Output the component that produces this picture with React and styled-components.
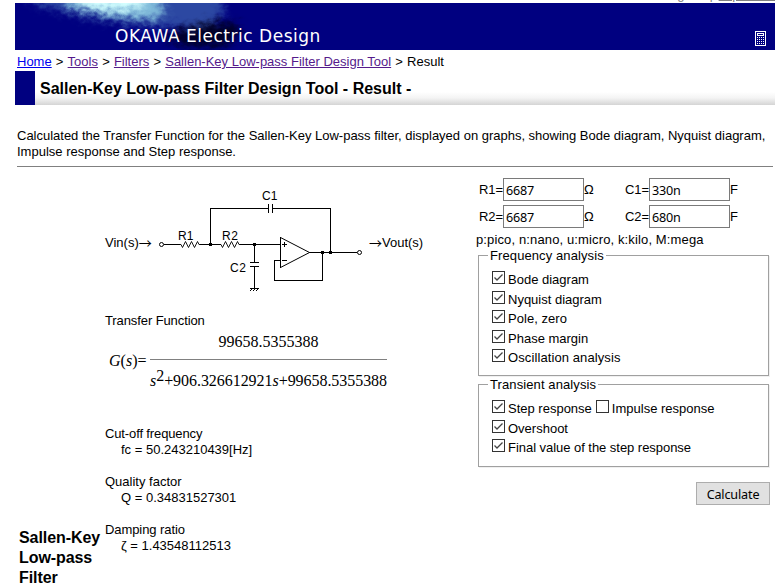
import React from "react";
import styled, { createGlobalStyle } from "styled-components";

const GlobalStyle = createGlobalStyle`
  *, *::before, *::after { box-sizing: border-box; }
  html, body { margin: 0; padding: 0; background: #fff; overflow: hidden; }
  body { font: 13px/16px "Liberation Sans", Arial, sans-serif; color: #000; }
`;

const Page = styled.div`
  width: 784px;
  height: 584px;
  padding: 0 9px 0 15px;
  overflow: hidden;
  display: flex;
  flex-direction: column;
`;

const LanguageBar = styled.div`
  height: 3px;
  flex: none;
  overflow: hidden;
  display: flex;
  flex-direction: column-reverse;
  color: #808080;
`;

const Languages = styled.div`
  flex: none;
  height: 16px;
  text-align: right;
  white-space: pre;
  word-spacing: 2px;
`;

const Banner = styled.header`
  height: 47px;
  flex: none;
  background: #000080;
  display: grid;
  & > * { grid-area: 1 / 1; }
`;

const BannerRow = styled.div`
  display: flex;
  justify-content: space-between;
  align-items: flex-end;
  padding: 0 9px 4px 100px;
  z-index: 1;
`;

const SiteName = styled.div`
  color: #fff;
  font: 17px/20px "DejaVu Sans", sans-serif;
  letter-spacing: 0.52px;
  white-space: nowrap;
`;

const Crumbs = styled.nav`
  height: 21px;
  flex: none;
  padding: 4px 0 0 2px;
  white-space: nowrap;
  word-spacing: ${(p) => p.$gap}px;
`;

const Link = styled.a`
  color: ${(p) => p.$color || "#551a8b"};
  text-decoration: underline;
  word-spacing: 0;
`;

const Heading = styled.h1`
  margin: 0;
  height: 34px;
  flex: none;
  border-left: 20px solid #000080;
  padding: 8px 0 0 5px;
  font-size: 16px;
  line-height: 20px;
  background: linear-gradient(#fff 0, #fff 21px, #f4f4f4 27px, #d4d4d4 34px);
`;

const Intro = styled.div`
  height: 62px;
  flex: none;
  margin: 0 2px;
  padding-top: 23px;
  border-bottom: 1px solid #808080;
`;

const TextLine = styled.div`
  height: ${(p) => p.$height || 16}px;
  white-space: pre;
  letter-spacing: ${(p) => p.$spacing || 0}px;
  padding-left: ${(p) => p.$indent || 0}px;
`;

const Main = styled.main`
  display: flex;
  flex: none;
  height: 417px;
`;

const Side = styled.aside`
  width: 90px;
  padding: 361px 0 0 4px;
  font-size: 16px;
  line-height: 20px;
  font-weight: bold;
  white-space: nowrap;
  letter-spacing: -0.08px;
`;

const Results = styled.section`
  width: 356px;
`;

const CircuitRow = styled.div`
  display: flex;
  height: 146px;
  padding-top: 21px;
`;

const Port = styled.div`
  width: ${(p) => p.$width}px;
  padding-top: 47px;
  white-space: nowrap;
  display: flex;
`;

const Arrow = styled.span`
  width: 13px;
  font-family: "Noto Sans CJK JP", sans-serif;
`;

const Formula = styled.div`
  display: flex;
  height: 97px;
  padding: 3px 0 0 4px;
  font: 16px/20px "Liberation Serif", "Times New Roman", serif;
`;

const FormulaName = styled.div`
  width: 41px;
  padding-top: 19px;
`;

const Fraction = styled.div`
  width: 237px;
  height: 59px;
  text-align: center;
  white-space: nowrap;
`;

const Numerator = styled.div`
  height: 28px;
  border-bottom: 1px solid #808080;
`;

const Denominator = styled.div`
  padding-top: 11px;
  text-align: left;
  letter-spacing: -0.05px;
  sup { font-size: 16px; line-height: 0; vertical-align: 5px; }
`;

const ResultItem = styled.div`
  height: 48px;
`;

const Form = styled.form`
  width: 309px;
  padding: 11px 0 0 15px;
`;

const FieldRow = styled.div`
  display: flex;
  height: 27px;
  padding-left: 3px;
`;

const FieldLabel = styled.label`
  width: ${(p) => p.$width}px;
  padding-top: 4px;
  white-space: nowrap;
  letter-spacing: -0.1px;
`;

const Input = styled.input`
  width: 81px;
  height: 23px;
  border: 1px solid #7a7a7a;
  border-radius: 0;
  background: #fff;
  padding: 1px 2px 0;
  outline: none;
  font: 12.6px "Noto Sans", sans-serif;
  letter-spacing: -0.2px;
  color: #000;
`;

const Group = styled.fieldset`
  margin: 0 0 0 2px;
  padding: 8px 0 0 13px;
  width: 291px;
  min-width: 0;
  height: ${(p) => p.$height}px;
  border: 1px solid #a0a0a0;
  box-shadow: 1px 1px 0 #f0f0f0;
  legend {
    margin-left: -4px;
    padding: 1px 2px 0;
    height: 16px;
    white-space: nowrap;
    letter-spacing: 0.1px;
  }
`;

const CheckRow = styled.div`
  display: flex;
  height: 19.5px;
`;

const CheckLabel = styled.label`
  display: flex;
  gap: 3px;
  padding-right: 4px;
  white-space: nowrap;
  span { padding-top: 1px; letter-spacing: ${(p) => p.$spacing || 0}px; }
`;

const Box = styled.svg`
  width: 13px;
  height: 13px;
  flex: none;
`;

const Submit = styled.button`
  display: block;
  width: 74px;
  height: 23px;
  margin: 15px 0 0 220px;
  padding: 1px 0 0;
  border: 1px solid #adadad;
  border-radius: 0;
  background: #e1e1e1;
  font: 12.6px "Noto Sans", sans-serif;
  letter-spacing: -0.15px;
  color: #000;
`;

function BannerArt() {
  return (
    <svg width="760" height="47" viewBox="15 3 760 47">
      <defs>
        <filter id="ripple" x="-20%" y="-60%" width="140%" height="220%" colorInterpolationFilters="sRGB">
          <feGaussianBlur stdDeviation="4.5" result="b" />
          <feTurbulence type="fractalNoise" baseFrequency="0.14 0.2" numOctaves="2" seed="4" result="n" />
          <feDisplacementMap in="b" in2="n" scale="12" xChannelSelector="R" yChannelSelector="G" />
        </filter>
      </defs>
      <g filter="url(#ripple)">
        <path d="M24 -12H215L226 12L205 27L166 27L130 24L96 19L58 10L34 4Z" fill="#3f66b0" opacity=".7" />
        <path d="M55 -12H150L166 12L154 20L126 18L98 14L70 8Z" fill="#8fd0e4" opacity=".85" />
        <path d="M72 -12H134L146 6L124 10L100 9L80 5Z" fill="#d4ffff" />
        <path d="M160 37L190 27L214 22L236 24L242 34L222 47L184 46Z" fill="#000018" opacity=".85" />
      </g>
    </svg>
  );
}

function CalculatorIcon() {
  const dots = [];
  for (let r = 0; r < 4; r++)
    for (let c = 0; c < 4; c++)
      dots.push(<rect key={`${r}-${c}`} x={2 + c * 2} y={6 + r * 2} width="1" height="1" />);
  return (
    <svg width="11" height="15" viewBox="0 0 11 15" fill="#fff" shapeRendering="crispEdges">
      <path d="M.5.5h10v14H.5zM2.5 2.5h6v2h-6z" fill="none" stroke="#fff" />
      {dots}
    </svg>
  );
}

function Circuit() {
  return (
    <svg width="212" height="110" viewBox="157 188 212 110" fill="none" stroke="#000" shapeRendering="crispEdges">
      <path d="M164 244.5H180M200 244.5H221M240 244.5H280M210.5 245V208.5H268M272 208.5H330.5V252" />
      <path d="M268.5 204V213M272.5 204V213M254.5 244V262M250 262.5H259M250 266.5H259M254.5 267V288M250 288.5H259" />
      <path d="M250 291L252 289M253 291L255 289M256 291L258 289" />
      <path d="M280.5 237V268M309 252.5H357M322.5 252V280.5H274.5V260.5H280M282 244.5H287M284.5 242V247M282 260.5H287" />
      <g shapeRendering="auto">
        <path d="M280.5 237.5L309.5 252.5L280.5 267.5" />
        <path d="M180 244.5h1l1.5 3l3-6l3 6l3-6l3 6l3-6l1.5 3h1M220 244.5h1l1.5 3l3-6l3 6l3-6l3 6l3-6l1.5 3h1" strokeWidth=".9" />
        <circle cx="161.5" cy="244.5" r="2" />
        <circle cx="359.5" cy="252.5" r="2" />
      </g>
      <path d="M209 243h3v3h-3zM253 243h3v3h-3zM321 251h3v3h-3zM329 251h3v3h-3z" fill="#000" stroke="none" />
      <g fill="#000" stroke="none" fontFamily="Liberation Sans, Arial, sans-serif" fontSize="12">
        <text x="178" y="240">R1</text>
        <text x="222" y="240" textLength="16">R2</text>
        <text x="262" y="200">C1</text>
        <text x="230" y="272" textLength="16">C2</text>
      </g>
    </svg>
  );
}

function Check({ label, checked = true, spacing }) {
  return (
    <CheckLabel $spacing={spacing}>
      <Box viewBox="0 0 13 13" fill="none">
        <rect x=".5" y=".5" width="12" height="12" fill="#fff" stroke="#333" />
        {checked && <path d="M2.5 6.5L5 9L10.5 3.5" stroke="#444" strokeWidth="1.3" />}
      </Box>
      <span>{label}</span>
    </CheckLabel>
  );
}

function Fields({ n, c }) {
  return (
    <FieldRow>
      <FieldLabel $width={24}>R{n}=</FieldLabel>
      <Input defaultValue="6687" />
      <FieldLabel $width={41}>Ω</FieldLabel>
      <FieldLabel $width={24}>C{n}=</FieldLabel>
      <Input defaultValue={c} />
      <FieldLabel $width={10}>F</FieldLabel>
    </FieldRow>
  );
}

const results = [
  ["Cut-off frequency", "fc = 50.243210439[Hz]", -0.13],
  ["Quality factor", "Q = 0.34831527301", 0],
  ["Damping ratio", "ζ = 1.43548112513", -0.08],
];

const frequencyChecks = [
  ["Bode diagram", 0],
  ["Nyquist diagram", 0],
  ["Pole, zero", 0.05],
  ["Phase margin", 0],
  ["Oscillation analysis", 0.1],
];

export default function App() {
  return (
    <Page>
      <GlobalStyle />
      <LanguageBar>
        <Languages>English | <Link $color="#808080">Japanese</Link></Languages>
      </LanguageBar>
      <Banner>
        <BannerArt />
        <BannerRow>
          <SiteName>OKAWA Electric Design</SiteName>
          <CalculatorIcon />
        </BannerRow>
      </Banner>
      <Crumbs $gap={0.55}>
        <Link $color="#0000ee">Home</Link> &gt; <Link>Tools</Link> &gt; <Link>Filters</Link> &gt;{" "}
        <Link>Sallen-Key Low-pass Filter Design Tool</Link> &gt; Result
      </Crumbs>
      <Heading>Sallen-Key Low-pass Filter Design Tool - Result -</Heading>
      <Intro>
        <TextLine $spacing={-0.008}>Calculated the Transfer Function for the Sallen-Key Low-pass filter, displayed on graphs, showing Bode diagram, Nyquist diagram,</TextLine>
        <TextLine>Impulse response and Step response.</TextLine>
      </Intro>
      <Main>
        <Side>Sallen-Key<br />Low-pass<br />Filter</Side>
        <Results>
          <CircuitRow>
            <Port $width={52}>Vin(s)<Arrow>→</Arrow></Port>
            <Circuit />
            <Port $width={60}><Arrow>→</Arrow>Vout(s)</Port>
          </CircuitRow>
          <TextLine $spacing={-0.1}>Transfer Function</TextLine>
          <Formula>
            <FormulaName><i>G</i>(<i>s</i>)=</FormulaName>
            <Fraction>
              <Numerator>99658.5355388</Numerator>
              <Denominator><i>s</i><sup>2</sup>+906.326612921<i>s</i>+99658.5355388</Denominator>
            </Fraction>
          </Formula>
          {results.map(([name, value, spacing]) => (
            <ResultItem key={name}>
              <TextLine $spacing={spacing}>{name}</TextLine>
              <TextLine $indent={16}>{value}</TextLine>
            </ResultItem>
          ))}
        </Results>
        <Form>
          <Fields n={1} c="330n" />
          <Fields n={2} c="680n" />
          <TextLine $height={15} $spacing={0.13}>p:pico, n:nano, u:micro, k:kilo, M:mega</TextLine>
          <Group $height={129}>
            <legend>Frequency analysis</legend>
            {frequencyChecks.map(([label, spacing]) => (
              <CheckRow key={label}><Check label={label} spacing={spacing} /></CheckRow>
            ))}
          </Group>
          <Group $height={91}>
            <legend>Transient analysis</legend>
            <CheckRow>
              <Check label="Step response" />
              <Check label="Impulse response" checked={false} />
            </CheckRow>
            <CheckRow><Check label="Overshoot" /></CheckRow>
            <CheckRow><Check label="Final value of the step response" spacing={-0.04} /></CheckRow>
          </Group>
          <Submit type="button">Calculate</Submit>
        </Form>
      </Main>
    </Page>
  );
}
